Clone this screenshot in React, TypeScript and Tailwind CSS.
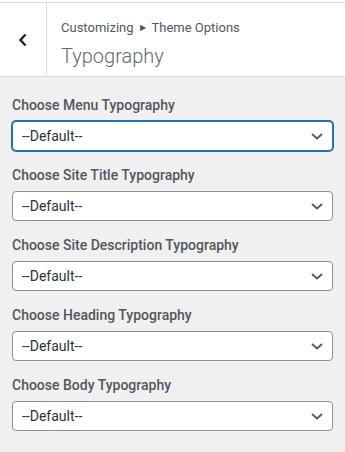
import React from 'react'

const controls = [
  { label: 'Choose Menu Typography', focused: true },
  { label: 'Choose Site Title Typography' },
  { label: 'Choose Site Description Typography' },
  { label: 'Choose Heading Typography' },
  { label: 'Choose Body Typography' },
]

function Chevron() {
  return (
    <svg width="12" height="7" viewBox="0 0 12 7" className="shrink-0">
      <polyline points="1,1 6,5.5 11,1" fill="none" stroke="#50575e" strokeWidth="1.8" />
    </svg>
  )
}

export default function App() {
  return (
    <div className="w-[345px] h-[452px] bg-[#f0f0f1] overflow-hidden" style={{ fontFamily: 'Roboto, "Noto Sans", sans-serif' }}>
      <div className="h-[2px] bg-white" />
      {/* header */}
      <div className="flex h-[75px] bg-white border-y border-[#dcdcde]">
        <div className="w-[47px] border-r border-[#dcdcde] flex items-center justify-center">
          <svg width="10" height="14" viewBox="0 0 10 14">
            <polyline points="7.5,1.5 2.5,7 7.5,12.5" fill="none" stroke="#1d2327" strokeWidth="2.4" />
          </svg>
        </div>
        <div className="pl-[14px] pt-[15px]">
          <div className="flex items-center gap-[6px] text-[13px] leading-5 text-[#50575e]">
            <span>Customizing</span>
            <span className="text-[8px] leading-none">▶</span>
            <span>Theme Options</span>
          </div>
          <div className="mt-[6px] text-[20px] leading-6 font-light text-[#646970]">Typography</div>
        </div>
      </div>
      {/* controls */}
      <div className="px-3 pt-4 flex flex-col gap-3">
        {controls.map((c) => (
          <div key={c.label}>
            <div className="text-[14px] leading-6 font-medium text-[#50575e]">{c.label}</div>
            <div
              className={
                c.focused
                  ? 'mt-1 h-[30px] flex items-center justify-between pl-[9px] pr-[9px] bg-white rounded-[4px] border border-[#2271b1] shadow-[0_0_0_1px_#2271b1]'
                  : 'mt-1 h-[30px] flex items-center justify-between pl-[9px] pr-[9px] bg-white rounded-[4px] border border-[#8c8f94]'
              }
            >
              <span className="text-[14px] text-[#2c3338]">--Default--</span>
              <Chevron />
            </div>
          </div>
        ))}
      </div>
    </div>
  )
}
